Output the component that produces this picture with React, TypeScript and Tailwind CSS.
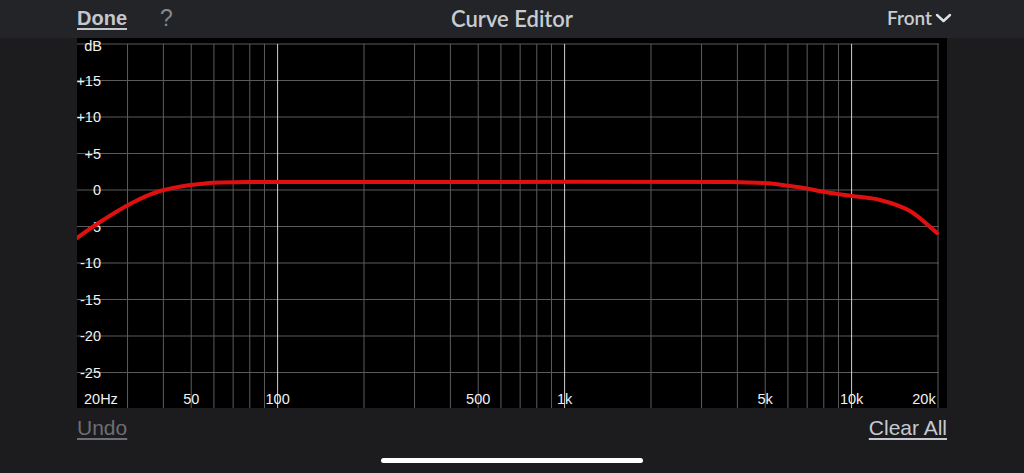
import React from 'react';

const W = 870;
const H = 370;
const DECADE = 287;

const xOf = (f: number) => DECADE * Math.log10(f / 20);
const yOf = (db: number) => 6 + (20 - db) * 7.3;

const minorFreqs = [
  30, 40, 50, 60, 70, 80, 90, 200, 300, 400, 500, 600, 700, 800, 900, 2000, 3000, 4000, 5000,
  6000, 7000, 8000, 9000, 20000,
];
const majorFreqs = [100, 1000, 10000];
const dbLines = [15, 10, 5, 0, -5, -10, -15, -20, -25];

// rough trace of the response curve
const curvePts: [number, number][] = [
  [0, 200], [23, 184], [53, 166], [83, 153], [123, 146], [173, 144], [400, 144],
  [653, 144], [713, 148], [748, 154], [775, 158], [803, 162], [833, 173], [860, 195],
];

function smoothPath(pts: [number, number][]) {
  let d = `M ${pts[0][0]} ${pts[0][1]}`;
  for (let i = 0; i < pts.length - 1; i++) {
    const p0 = pts[i - 1] || pts[i];
    const p1 = pts[i];
    const p2 = pts[i + 1];
    const p3 = pts[i + 2] || p2;
    const c1x = p1[0] + (p2[0] - p0[0]) / 6;
    const c1y = p1[1] + (p2[1] - p0[1]) / 6;
    const c2x = p2[0] - (p3[0] - p1[0]) / 6;
    const c2y = p2[1] - (p3[1] - p1[1]) / 6;
    d += ` C ${c1x} ${c1y} ${c2x} ${c2y} ${p2[0]} ${p2[1]}`;
  }
  return d;
}

const xLabels: Array<{ text: string; x: number; anchor: 'start' | 'middle' }> = [
  { text: '20Hz', x: 7, anchor: 'start' },
  { text: '50', x: xOf(50), anchor: 'middle' },
  { text: '100', x: xOf(100), anchor: 'middle' },
  { text: '500', x: xOf(500), anchor: 'middle' },
  { text: '1k', x: xOf(1000), anchor: 'middle' },
  { text: '5k', x: xOf(5000), anchor: 'middle' },
  { text: '10k', x: xOf(10000), anchor: 'middle' },
  { text: '20k', x: 847, anchor: 'middle' },
];

function Chart() {
  return (
    <svg width={W} height={H} viewBox={`0 0 ${W} ${H}`} className="block">
      <rect width={W} height={H} fill="#000" />
      {/* horizontal grid */}
      <line x1={0} x2={862} y1={yOf(20)} y2={yOf(20)} stroke="#5a5a5a" strokeWidth={1} />
      {dbLines.map((db) => (
        <line key={db} x1={0} x2={862} y1={yOf(db)} y2={yOf(db)} stroke="#5a5a5a" strokeWidth={1} />
      ))}
      {/* vertical grid */}
      {minorFreqs.map((f) => (
        <line key={f} x1={xOf(f)} x2={xOf(f)} y1={yOf(20)} y2={H} stroke="#5c5c5c" strokeWidth={1} />
      ))}
      {majorFreqs.map((f) => (
        <line key={f} x1={xOf(f)} x2={xOf(f)} y1={yOf(20)} y2={H} stroke="#d0d0d0" strokeWidth={1} />
      ))}

      <g fill="#f2f2f2" fontFamily="'Liberation Sans', Arial, sans-serif" fontSize={14.5}>
        <text x={25} y={13} textAnchor="end">dB</text>
        {dbLines.map((db) => (
          <text key={db} x={24} y={yOf(db) + 5} textAnchor="end">
            {db > 0 ? `+${db}` : db === 0 ? '0' : `${db}`}
          </text>
        ))}
        {xLabels.map((l) => (
          <text key={l.text} x={l.x} y={366} textAnchor={l.anchor}>
            {l.text}
          </text>
        ))}
      </g>

      <path
        d={smoothPath(curvePts)}
        fill="none"
        stroke="#e01010"
        strokeWidth={4}
        strokeLinecap="round"
        strokeLinejoin="round"
      />
    </svg>
  );
}

export default function App() {
  return (
    <div className="w-[1024px] h-[473px] bg-[#1c1c1f] flex flex-col overflow-hidden">
      <div className="h-[38px] bg-[#232428] flex items-center px-[77px] relative font-['Lato','Noto_Sans',sans-serif]">
        <span className="text-[20px] font-bold text-[#c3c7ce] underline underline-offset-[3px] decoration-2 font-['Liberation_Sans',Arial,sans-serif] -mt-[2px]">
          Done
        </span>
        <span className="ml-[33px] text-[23px] text-[#85888d] font-['Liberation_Sans',Arial,sans-serif] font-light -mt-[2px]">?</span>
        <span className="absolute left-0 right-0 text-center text-[22px] font-semibold text-[#c8ccd2] pointer-events-none -mt-[2px]">
          Curve Editor
        </span>
        <div className="ml-auto flex items-center gap-[3px] text-[19px] font-semibold text-[#c8ccd2] mr-[-5px] -mt-[2px]">
          <span>Front</span>
          <svg width="17" height="12" viewBox="0 0 17 12" fill="none">
            <path d="M2 3 L8.5 9 L15 3" stroke="#dfe2e6" strokeWidth="2.4" strokeLinecap="round" strokeLinejoin="round" />
          </svg>
        </div>
      </div>

      <div className="px-[77px]">
        <Chart />
      </div>

      <div className="flex justify-between items-center px-[77px] pt-[4px] font-['Liberation_Sans',Arial,sans-serif] text-[21px]">
        <span className="text-[#6c6f74] underline underline-offset-[3px] decoration-2">Undo</span>
        <span className="text-[#c6cad0] underline underline-offset-[3px] decoration-2">Clear All</span>
      </div>

      <div className="flex justify-center mt-auto mb-[10px]">
        <div className="w-[262px] h-[5px] rounded-full bg-white" />
      </div>
    </div>
  );
}
